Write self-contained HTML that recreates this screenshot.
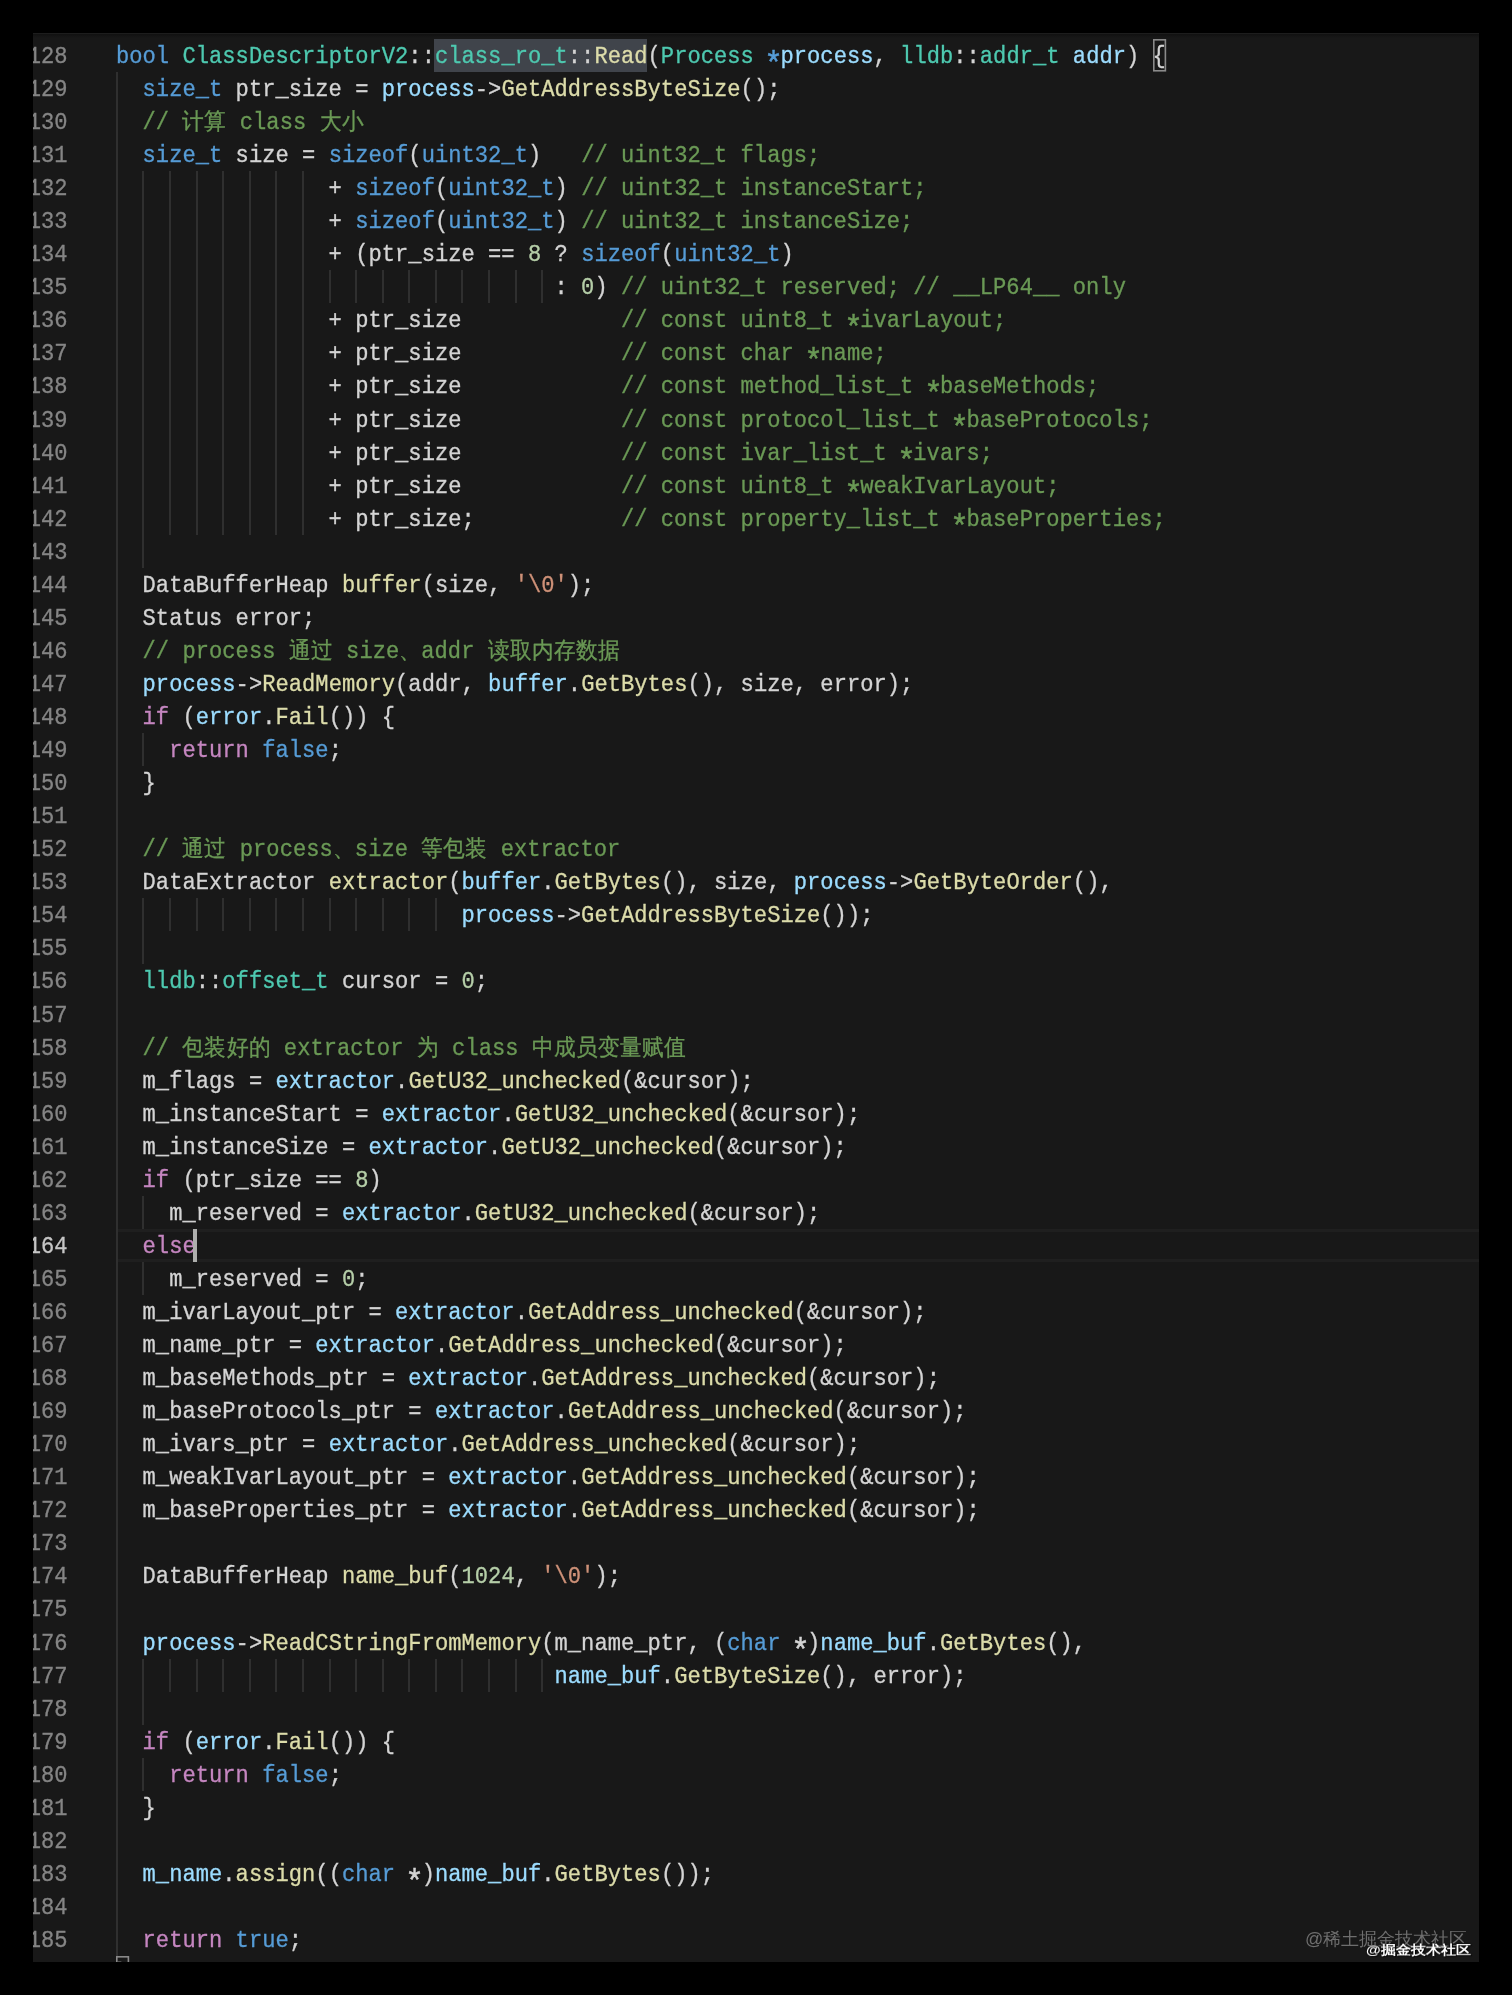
<!DOCTYPE html>
<html><head><meta charset="utf-8"><style>
html,body{margin:0;padding:0;background:#000;width:1512px;height:1995px;overflow:hidden}
#ed{position:absolute;left:33px;top:33px;width:1446px;height:1929px;background:#181818;overflow:hidden}
.l{position:absolute;left:83.0px;white-space:pre;font-family:"Liberation Mono",monospace;font-size:22.1px;letter-spacing:0.03px;line-height:33.055px;height:33.055px;color:#d4d4d4;z-index:2;will-change:transform;-webkit-text-stroke:0.3px currentColor;transform:scaleY(1.06);transform-origin:0 24.2px}
.ln{position:absolute;left:-50px;width:84.5px;text-align:right;font-family:"Liberation Mono",monospace;font-size:22.1px;letter-spacing:0.03px;line-height:33.055px;color:#858585;will-change:transform;-webkit-text-stroke:0.3px currentColor;transform:scaleY(1.1);transform-origin:0 24.2px}
.ln.act{color:#c6c6c6}
.g{position:absolute;width:2px;background:#2f2f2f;z-index:1}
.k{color:#569cd6}.c{color:#c586c0}.t{color:#4ec9b0}.f{color:#dcdcaa}.v{color:#9cdcfe}.m{color:#6a9955}.n{color:#b5cea8}.s{color:#ce9178}
#shadow{position:absolute;left:0;top:0;width:100%;height:5px;background:linear-gradient(rgba(0,0,0,.3),rgba(0,0,0,0));z-index:5;border-top:1px solid #1d1d1d;box-sizing:border-box}
.sel{position:absolute;background:#40444b;z-index:1}
.br{position:absolute;z-index:3;overflow:visible}
.cur{position:absolute;left:160.3px;width:3.6px;height:32.7px;background:#aeafad;z-index:4}
.curln{position:absolute;left:85px;width:1400px;height:26.5px;border-top:3px solid #1f1f1f;border-bottom:3px solid #1f1f1f;z-index:0}
#wm1{position:absolute;left:1272px;top:1894.5px;font-family:"Liberation Sans",sans-serif;font-size:18px;line-height:22px;color:#6e6e6e;white-space:nowrap;z-index:6;will-change:transform}
#wm2{position:absolute;left:1333px;top:1909px;font-family:"Liberation Sans",sans-serif;font-size:15px;line-height:16px;font-weight:bold;color:#fff;white-space:nowrap;text-shadow:0 0 2px #000,1px 1px 1px #000;z-index:7;will-change:transform;transform:scaleY(0.87);transform-origin:0 8px}

.ast{display:inline-block;transform:translateY(8.3px) scale(1.4)}

</style></head><body>
<div id="ed">
<div id="shadow"></div>
<div class="sel" style="left:400.9px;top:5.700000000000003px;width:213.60000000000002px;height:33.1px"></div>
<svg class="br" style="left:1120.4px;top:5.700000000000003px" width="13.2" height="32.6" viewBox="0 0 13.2 32.6"><rect x="0.8" y="0.8" width="11.6" height="31.0" fill="none" stroke="#8a8a8a" stroke-width="1.6"/></svg>
<svg class="br" style="left:82.7px;top:1923.0900000000001px" width="13.2" height="32.6" viewBox="0 0 13.2 32.6"><rect x="0.8" y="0.8" width="11.6" height="31.0" fill="none" stroke="#8a8a8a" stroke-width="1.6"/></svg>
<div class="cur" style="top:1196.2px"></div>
<div class="curln" style="top:1196.0px"></div>
<div id="wm1">@稀土掘金技术社区</div>
<div id="wm2">@掘金技术社区</div>

<div class="ln" style="top:7.90px">128</div>
<div class="l" style="top:7.90px"><span class="k">bool</span> <span class="t">ClassDescriptorV2</span>::<span class="t">class_ro_t</span>::<span class="f">Read</span>(<span class="t">Process</span> <span class="k"><span class="ast">*</span></span><span class="v">process</span>, <span class="t">lldb</span>::<span class="t">addr_t</span> <span class="v">addr</span>) {</div>
<div class="ln" style="top:40.95px">129</div>
<div class="l" style="top:40.95px">  <span class="k">size_t</span> ptr_size = <span class="v">process</span>-&gt;<span class="f">GetAddressByteSize</span>();</div>
<div class="ln" style="top:74.01px">130</div>
<div class="l" style="top:74.01px">  <span class="m">// 计算 class 大小</span></div>
<div class="ln" style="top:107.06px">131</div>
<div class="l" style="top:107.06px">  <span class="k">size_t</span> size = <span class="k">sizeof</span>(<span class="k">uint32_t</span>)   <span class="m">// uint32_t flags;</span></div>
<div class="ln" style="top:140.12px">132</div>
<div class="l" style="top:140.12px">                + <span class="k">sizeof</span>(<span class="k">uint32_t</span>) <span class="m">// uint32_t instanceStart;</span></div>
<div class="ln" style="top:173.18px">133</div>
<div class="l" style="top:173.18px">                + <span class="k">sizeof</span>(<span class="k">uint32_t</span>) <span class="m">// uint32_t instanceSize;</span></div>
<div class="ln" style="top:206.23px">134</div>
<div class="l" style="top:206.23px">                + (ptr_size == <span class="n">8</span> ? <span class="k">sizeof</span>(<span class="k">uint32_t</span>)</div>
<div class="ln" style="top:239.28px">135</div>
<div class="l" style="top:239.28px">                                 : <span class="n">0</span>) <span class="m">// uint32_t reserved; // __LP64__ only</span></div>
<div class="ln" style="top:272.34px">136</div>
<div class="l" style="top:272.34px">                + ptr_size            <span class="m">// const uint8_t <span class="ast">*</span>ivarLayout;</span></div>
<div class="ln" style="top:305.39px">137</div>
<div class="l" style="top:305.39px">                + ptr_size            <span class="m">// const char <span class="ast">*</span>name;</span></div>
<div class="ln" style="top:338.45px">138</div>
<div class="l" style="top:338.45px">                + ptr_size            <span class="m">// const method_list_t <span class="ast">*</span>baseMethods;</span></div>
<div class="ln" style="top:371.50px">139</div>
<div class="l" style="top:371.50px">                + ptr_size            <span class="m">// const protocol_list_t <span class="ast">*</span>baseProtocols;</span></div>
<div class="ln" style="top:404.56px">140</div>
<div class="l" style="top:404.56px">                + ptr_size            <span class="m">// const ivar_list_t <span class="ast">*</span>ivars;</span></div>
<div class="ln" style="top:437.61px">141</div>
<div class="l" style="top:437.61px">                + ptr_size            <span class="m">// const uint8_t <span class="ast">*</span>weakIvarLayout;</span></div>
<div class="ln" style="top:470.67px">142</div>
<div class="l" style="top:470.67px">                + ptr_size;           <span class="m">// const property_list_t <span class="ast">*</span>baseProperties;</span></div>
<div class="ln" style="top:503.73px">143</div>
<div class="l" style="top:503.73px"></div>
<div class="ln" style="top:536.78px">144</div>
<div class="l" style="top:536.78px">  DataBufferHeap <span class="f">buffer</span>(size, <span class="s">'\0'</span>);</div>
<div class="ln" style="top:569.83px">145</div>
<div class="l" style="top:569.83px">  Status error;</div>
<div class="ln" style="top:602.89px">146</div>
<div class="l" style="top:602.89px">  <span class="m">// process 通过 size、addr 读取内存数据</span></div>
<div class="ln" style="top:635.94px">147</div>
<div class="l" style="top:635.94px">  <span class="v">process</span>-&gt;<span class="f">ReadMemory</span>(addr, <span class="v">buffer</span>.<span class="f">GetBytes</span>(), size, error);</div>
<div class="ln" style="top:669.00px">148</div>
<div class="l" style="top:669.00px">  <span class="c">if</span> (<span class="v">error</span>.<span class="f">Fail</span>()) {</div>
<div class="ln" style="top:702.05px">149</div>
<div class="l" style="top:702.05px">    <span class="c">return</span> <span class="k">false</span>;</div>
<div class="ln" style="top:735.11px">150</div>
<div class="l" style="top:735.11px">  }</div>
<div class="ln" style="top:768.16px">151</div>
<div class="l" style="top:768.16px"></div>
<div class="ln" style="top:801.22px">152</div>
<div class="l" style="top:801.22px">  <span class="m">// 通过 process、size 等包装 extractor</span></div>
<div class="ln" style="top:834.27px">153</div>
<div class="l" style="top:834.27px">  DataExtractor <span class="f">extractor</span>(<span class="v">buffer</span>.<span class="f">GetBytes</span>(), size, <span class="v">process</span>-&gt;<span class="f">GetByteOrder</span>(),</div>
<div class="ln" style="top:867.33px">154</div>
<div class="l" style="top:867.33px">                          <span class="v">process</span>-&gt;<span class="f">GetAddressByteSize</span>());</div>
<div class="ln" style="top:900.38px">155</div>
<div class="l" style="top:900.38px"></div>
<div class="ln" style="top:933.44px">156</div>
<div class="l" style="top:933.44px">  <span class="t">lldb</span>::<span class="t">offset_t</span> cursor = <span class="n">0</span>;</div>
<div class="ln" style="top:966.50px">157</div>
<div class="l" style="top:966.50px"></div>
<div class="ln" style="top:999.55px">158</div>
<div class="l" style="top:999.55px">  <span class="m">// 包装好的 extractor 为 class 中成员变量赋值</span></div>
<div class="ln" style="top:1032.61px">159</div>
<div class="l" style="top:1032.61px">  m_flags = <span class="v">extractor</span>.<span class="f">GetU32_unchecked</span>(&amp;cursor);</div>
<div class="ln" style="top:1065.66px">160</div>
<div class="l" style="top:1065.66px">  m_instanceStart = <span class="v">extractor</span>.<span class="f">GetU32_unchecked</span>(&amp;cursor);</div>
<div class="ln" style="top:1098.72px">161</div>
<div class="l" style="top:1098.72px">  m_instanceSize = <span class="v">extractor</span>.<span class="f">GetU32_unchecked</span>(&amp;cursor);</div>
<div class="ln" style="top:1131.77px">162</div>
<div class="l" style="top:1131.77px">  <span class="c">if</span> (ptr_size == <span class="n">8</span>)</div>
<div class="ln" style="top:1164.83px">163</div>
<div class="l" style="top:1164.83px">    m_reserved = <span class="v">extractor</span>.<span class="f">GetU32_unchecked</span>(&amp;cursor);</div>
<div class="ln act" style="top:1197.88px">164</div>
<div class="l" style="top:1197.88px">  <span class="c">else</span></div>
<div class="ln" style="top:1230.94px">165</div>
<div class="l" style="top:1230.94px">    m_reserved = <span class="n">0</span>;</div>
<div class="ln" style="top:1263.99px">166</div>
<div class="l" style="top:1263.99px">  m_ivarLayout_ptr = <span class="v">extractor</span>.<span class="f">GetAddress_unchecked</span>(&amp;cursor);</div>
<div class="ln" style="top:1297.05px">167</div>
<div class="l" style="top:1297.05px">  m_name_ptr = <span class="v">extractor</span>.<span class="f">GetAddress_unchecked</span>(&amp;cursor);</div>
<div class="ln" style="top:1330.10px">168</div>
<div class="l" style="top:1330.10px">  m_baseMethods_ptr = <span class="v">extractor</span>.<span class="f">GetAddress_unchecked</span>(&amp;cursor);</div>
<div class="ln" style="top:1363.15px">169</div>
<div class="l" style="top:1363.15px">  m_baseProtocols_ptr = <span class="v">extractor</span>.<span class="f">GetAddress_unchecked</span>(&amp;cursor);</div>
<div class="ln" style="top:1396.21px">170</div>
<div class="l" style="top:1396.21px">  m_ivars_ptr = <span class="v">extractor</span>.<span class="f">GetAddress_unchecked</span>(&amp;cursor);</div>
<div class="ln" style="top:1429.27px">171</div>
<div class="l" style="top:1429.27px">  m_weakIvarLayout_ptr = <span class="v">extractor</span>.<span class="f">GetAddress_unchecked</span>(&amp;cursor);</div>
<div class="ln" style="top:1462.32px">172</div>
<div class="l" style="top:1462.32px">  m_baseProperties_ptr = <span class="v">extractor</span>.<span class="f">GetAddress_unchecked</span>(&amp;cursor);</div>
<div class="ln" style="top:1495.38px">173</div>
<div class="l" style="top:1495.38px"></div>
<div class="ln" style="top:1528.43px">174</div>
<div class="l" style="top:1528.43px">  DataBufferHeap <span class="f">name_buf</span>(<span class="n">1024</span>, <span class="s">'\0'</span>);</div>
<div class="ln" style="top:1561.49px">175</div>
<div class="l" style="top:1561.49px"></div>
<div class="ln" style="top:1594.54px">176</div>
<div class="l" style="top:1594.54px">  <span class="v">process</span>-&gt;<span class="f">ReadCStringFromMemory</span>(m_name_ptr, (<span class="k">char</span> <span class="ast">*</span>)<span class="v">name_buf</span>.<span class="f">GetBytes</span>(),</div>
<div class="ln" style="top:1627.60px">177</div>
<div class="l" style="top:1627.60px">                                 <span class="v">name_buf</span>.<span class="f">GetByteSize</span>(), error);</div>
<div class="ln" style="top:1660.65px">178</div>
<div class="l" style="top:1660.65px"></div>
<div class="ln" style="top:1693.71px">179</div>
<div class="l" style="top:1693.71px">  <span class="c">if</span> (<span class="v">error</span>.<span class="f">Fail</span>()) {</div>
<div class="ln" style="top:1726.76px">180</div>
<div class="l" style="top:1726.76px">    <span class="c">return</span> <span class="k">false</span>;</div>
<div class="ln" style="top:1759.82px">181</div>
<div class="l" style="top:1759.82px">  }</div>
<div class="ln" style="top:1792.87px">182</div>
<div class="l" style="top:1792.87px"></div>
<div class="ln" style="top:1825.93px">183</div>
<div class="l" style="top:1825.93px">  <span class="v">m_name</span>.<span class="f">assign</span>((<span class="k">char</span> <span class="ast">*</span>)<span class="v">name_buf</span>.<span class="f">GetBytes</span>());</div>
<div class="ln" style="top:1858.98px">184</div>
<div class="l" style="top:1858.98px"></div>
<div class="ln" style="top:1892.04px">185</div>
<div class="l" style="top:1892.04px">  <span class="c">return</span> <span class="k">true</span>;</div>
<div class="ln" style="top:1925.09px">186</div>
<div class="l" style="top:1925.09px">}</div>
<div class="g" style="left:83px;top:38.95px;height:1884.14px"></div>
<div class="g" style="left:109px;top:138.12px;height:396.66px"></div>
<div class="g" style="left:109px;top:700.05px;height:33.06px"></div>
<div class="g" style="left:109px;top:865.33px;height:66.11px"></div>
<div class="g" style="left:109px;top:1162.83px;height:33.06px"></div>
<div class="g" style="left:109px;top:1228.94px;height:33.05px"></div>
<div class="g" style="left:109px;top:1625.60px;height:66.11px"></div>
<div class="g" style="left:109px;top:1724.76px;height:33.06px"></div>
<div class="g" style="left:136px;top:138.12px;height:363.61px"></div>
<div class="g" style="left:136px;top:865.33px;height:33.06px"></div>
<div class="g" style="left:136px;top:1625.60px;height:33.06px"></div>
<div class="g" style="left:163px;top:138.12px;height:363.61px"></div>
<div class="g" style="left:163px;top:865.33px;height:33.06px"></div>
<div class="g" style="left:163px;top:1625.60px;height:33.06px"></div>
<div class="g" style="left:189px;top:138.12px;height:363.61px"></div>
<div class="g" style="left:189px;top:865.33px;height:33.06px"></div>
<div class="g" style="left:189px;top:1625.60px;height:33.06px"></div>
<div class="g" style="left:216px;top:138.12px;height:363.61px"></div>
<div class="g" style="left:216px;top:865.33px;height:33.06px"></div>
<div class="g" style="left:216px;top:1625.60px;height:33.06px"></div>
<div class="g" style="left:242px;top:138.12px;height:363.61px"></div>
<div class="g" style="left:242px;top:865.33px;height:33.06px"></div>
<div class="g" style="left:242px;top:1625.60px;height:33.06px"></div>
<div class="g" style="left:269px;top:138.12px;height:363.61px"></div>
<div class="g" style="left:269px;top:865.33px;height:33.06px"></div>
<div class="g" style="left:269px;top:1625.60px;height:33.06px"></div>
<div class="g" style="left:296px;top:237.28px;height:33.06px"></div>
<div class="g" style="left:296px;top:865.33px;height:33.06px"></div>
<div class="g" style="left:296px;top:1625.60px;height:33.06px"></div>
<div class="g" style="left:322px;top:237.28px;height:33.06px"></div>
<div class="g" style="left:322px;top:865.33px;height:33.06px"></div>
<div class="g" style="left:322px;top:1625.60px;height:33.06px"></div>
<div class="g" style="left:349px;top:237.28px;height:33.06px"></div>
<div class="g" style="left:349px;top:865.33px;height:33.06px"></div>
<div class="g" style="left:349px;top:1625.60px;height:33.06px"></div>
<div class="g" style="left:375px;top:237.28px;height:33.06px"></div>
<div class="g" style="left:375px;top:865.33px;height:33.06px"></div>
<div class="g" style="left:375px;top:1625.60px;height:33.06px"></div>
<div class="g" style="left:402px;top:237.28px;height:33.06px"></div>
<div class="g" style="left:402px;top:865.33px;height:33.06px"></div>
<div class="g" style="left:402px;top:1625.60px;height:33.06px"></div>
<div class="g" style="left:428px;top:237.28px;height:33.06px"></div>
<div class="g" style="left:428px;top:1625.60px;height:33.06px"></div>
<div class="g" style="left:455px;top:237.28px;height:33.06px"></div>
<div class="g" style="left:455px;top:1625.60px;height:33.06px"></div>
<div class="g" style="left:482px;top:237.28px;height:33.06px"></div>
<div class="g" style="left:482px;top:1625.60px;height:33.06px"></div>
<div class="g" style="left:508px;top:237.28px;height:33.06px"></div>
<div class="g" style="left:508px;top:1625.60px;height:33.06px"></div>
</div>
</body></html>
